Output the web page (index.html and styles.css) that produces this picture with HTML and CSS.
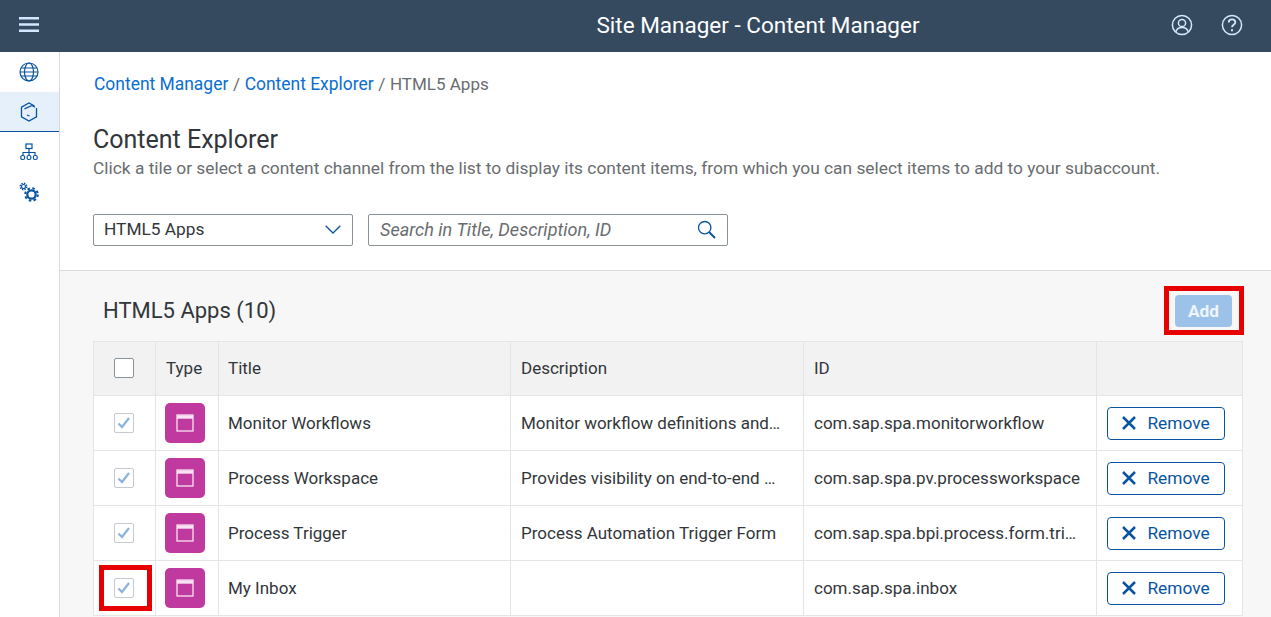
FILE: index.html
```html
<!DOCTYPE html>
<html lang="en">
<head>
<meta charset="utf-8">
<title>Site Manager - Content Manager</title>
<link rel="stylesheet" href="styles.css">
</head>
<body>
<header class="shell">
  <div class="shell-left">
    <svg class="menu-icon" width="20" height="15" viewBox="0 0 20 15"><path d="M0 1.300h20M0 7.500h20M0 13.700h20" stroke="#d1e8ff" stroke-width="2.600" fill="none"/></svg>
  </div>
  <div class="shell-title">Site Manager - Content Manager</div>
  <div class="shell-right">
    <svg width="22" height="22" viewBox="0 0 22 22" fill="none" stroke="#d1e8ff" stroke-width="1.500"><circle cx="11" cy="11" r="9.600"/><circle cx="11" cy="9" r="3.600"/><path d="M4.800 18c.6-3 3-4.600 6.200-4.600s5.600 1.600 6.200 4.600"/></svg>
    <svg width="22" height="22" viewBox="0 0 22 22" fill="none" stroke="#d1e8ff" stroke-width="1.500"><circle cx="11" cy="11" r="9.600"/><path d="M7.700 8.600c0-2 1.500-3.200 3.300-3.200s3.300 1.100 3.300 2.900c0 2.500-3.300 2.500-3.300 5" stroke-width="1.800"/><path d="M11 15.200v2" stroke-width="2"/></svg>
  </div>
</header>
<div class="body-row">
  <nav class="side">
    <div class="side-item">
      <svg width="20" height="20" viewBox="0 0 20 20" fill="none" stroke="#0854a0" stroke-width="1.200"><circle cx="10" cy="10" r="9"/><ellipse cx="10" cy="10" rx="4.500" ry="9"/><path d="M2 6h16M2 14h16M1 10h18"/></svg>
    </div>
    <div class="side-item side-item-active">
      <svg width="18" height="20" viewBox="0 0 18 20" fill="none" stroke="#0854a0" stroke-width="1.300"><path d="M4.500 6.800L12 3.500l3 1.700M16.500 6v8.800L9 19l-7.500-4.200V5.200L9 1l5.500 3"/><path d="M7 13l2.500 1"/></svg>
    </div>
    <div class="side-item">
      <svg width="18" height="18" viewBox="0 0 18 18" fill="none" stroke="#0854a0" stroke-width="1.200"><rect x="6" y="1" width="6" height="4.500"/><path d="M9 5.500v4M3 12V9.500h12V12M9 9.500V12"/><rect x=".8" y="12.500" width="3.800" height="4" rx="1.500"/><rect x="7.100" y="12.500" width="3.800" height="4" rx="1.500"/><rect x="13.400" y="12.500" width="3.800" height="4" rx="1.500"/></svg>
    </div>
    <div class="side-item">
      <svg width="20" height="20" viewBox="0 0 20 20" fill="none" stroke="#0854a0"><circle cx="12.500" cy="12.500" r="4.200" stroke-width="2.200"/><circle cx="12.500" cy="12.500" r="6.300" stroke-width="2" stroke-dasharray="2.500 2.450"/><circle cx="4.500" cy="4.500" r="2" stroke-width="1.100"/><circle cx="4.500" cy="4.500" r="3.300" stroke-width="1.300" stroke-dasharray="1.500 1.090"/></svg>
    </div>
  </nav>
  <main class="main">
    <section class="top">
      <div class="crumbs"><a class="crumb">Content Manager</a><span class="sep">/</span><a class="crumb">Content Explorer</a><span class="sep">/</span><span class="crumb-last">HTML5 Apps</span></div>
      <h1 class="title">Content Explorer</h1>
      <p class="desc">Click a tile or select a content channel from the list to display its content items, from which you can select items to add to your subaccount.</p>
      <div class="filters">
        <div class="field select"><span>HTML5 Apps</span>
          <svg width="16" height="9" viewBox="0 0 16 9" fill="none" stroke="#0854a0" stroke-width="1.300"><path d="M.7.7L8 8l7.300-7.300"/></svg>
        </div>
        <div class="field search"><span class="placeholder">Search in Title, Description, ID</span>
          <svg width="19" height="19" viewBox="0 0 19 19" fill="none" stroke="#0854a0"><circle cx="7.700" cy="7.700" r="6.200" stroke-width="1.300"/><path d="M12 12l6 6" stroke-width="2"/></svg>
        </div>
      </div>
    </section>
    <section class="panel">
      <div class="panel-head">
        <h2 class="panel-title">HTML5 Apps (10)</h2>
        <div class="add-wrap">
          <button class="add">Add</button>
          <span class="mark mark-add"></span>
        </div>
      </div>
      <table class="grid">
        <colgroup><col class="c1"><col class="c2"><col class="c3"><col class="c4"><col class="c5"><col class="c6"></colgroup>
        <thead><tr>
          <th class="center"><span class="cb cb-head"></span></th><th>Type</th><th class="tight">Title</th><th>Description</th><th>ID</th><th></th>
        </tr></thead>
        <tbody>
          <tr>
            <td class="center"><span class="cb"><svg width="14" height="12" viewBox="0 0 14 12" fill="none" stroke="#8cb3dc" stroke-width="2.200"><path d="M1.500 6.500l3.500 3.500 7-9"/></svg></span></td>
            <td class="tight"><span class="tile"><svg width="18" height="18" viewBox="0 0 18 18" fill="none" stroke="#f7e3f2"><rect x="1" y="1" width="16" height="16" stroke-width="1.300"/><path d="M1 3h16" stroke-width="3.400"/></svg></span></td>
            <td class="tight">Monitor Workflows</td><td><div class="clip clip-desc">Monitor workflow definitions and instances</div></td><td><div class="clip">com.sap.spa.monitorworkflow</div></td>
            <td><button class="remove"><svg width="14" height="14" viewBox="0 0 14 14" stroke="#0854a0" stroke-width="2.500"><path d="M1 1l12 12M13 1L1 13"/></svg>Remove</button></td>
          </tr>
          <tr>
            <td class="center"><span class="cb"><svg width="14" height="12" viewBox="0 0 14 12" fill="none" stroke="#8cb3dc" stroke-width="2.200"><path d="M1.500 6.500l3.500 3.500 7-9"/></svg></span></td>
            <td class="tight"><span class="tile"><svg width="18" height="18" viewBox="0 0 18 18" fill="none" stroke="#f7e3f2"><rect x="1" y="1" width="16" height="16" stroke-width="1.300"/><path d="M1 3h16" stroke-width="3.400"/></svg></span></td>
            <td class="tight">Process Workspace</td><td><div class="clip clip-desc">Provides visibility on end-to-end processes</div></td><td><div class="clip">com.sap.spa.pv.processworkspace</div></td>
            <td><button class="remove"><svg width="14" height="14" viewBox="0 0 14 14" stroke="#0854a0" stroke-width="2.500"><path d="M1 1l12 12M13 1L1 13"/></svg>Remove</button></td>
          </tr>
          <tr>
            <td class="center"><span class="cb"><svg width="14" height="12" viewBox="0 0 14 12" fill="none" stroke="#8cb3dc" stroke-width="2.200"><path d="M1.500 6.500l3.500 3.500 7-9"/></svg></span></td>
            <td class="tight"><span class="tile"><svg width="18" height="18" viewBox="0 0 18 18" fill="none" stroke="#f7e3f2"><rect x="1" y="1" width="16" height="16" stroke-width="1.300"/><path d="M1 3h16" stroke-width="3.400"/></svg></span></td>
            <td class="tight">Process Trigger</td><td><div class="clip clip-desc">Process Automation Trigger Form</div></td><td><div class="clip">com.sap.spa.bpi.process.form.trigger</div></td>
            <td><button class="remove"><svg width="14" height="14" viewBox="0 0 14 14" stroke="#0854a0" stroke-width="2.500"><path d="M1 1l12 12M13 1L1 13"/></svg>Remove</button></td>
          </tr>
          <tr>
            <td class="center mark-cell"><span class="cb"><svg width="14" height="12" viewBox="0 0 14 12" fill="none" stroke="#8cb3dc" stroke-width="2.200"><path d="M1.500 6.500l3.500 3.500 7-9"/></svg></span><span class="mark mark-check"></span></td>
            <td class="tight"><span class="tile"><svg width="18" height="18" viewBox="0 0 18 18" fill="none" stroke="#f7e3f2"><rect x="1" y="1" width="16" height="16" stroke-width="1.300"/><path d="M1 3h16" stroke-width="3.400"/></svg></span></td>
            <td class="tight">My Inbox</td><td></td><td><div class="clip">com.sap.spa.inbox</div></td>
            <td><button class="remove"><svg width="14" height="14" viewBox="0 0 14 14" stroke="#0854a0" stroke-width="2.500"><path d="M1 1l12 12M13 1L1 13"/></svg>Remove</button></td>
          </tr>
        </tbody>
      </table>
    </section>
  </main>
</div>
</body>
</html>
```
FILE: styles.css
```css
* { box-sizing: border-box; }
html, body { margin: 0; height: 100%; overflow: hidden; }
body { font-family: Roboto, Arial, sans-serif; font-size: 17.3px; color: #32363a; background: #fff; display: flex; flex-direction: column; }

.shell { flex: none; height: 52px; background: #354a5f; display: grid; grid-template-columns: 1fr auto 1fr; align-items: center; padding: 0 28px 3px 19px; }
.shell-left { display: flex; }
.shell-title { color: #fff; font-size: 22.5px; padding-left: 254px; }
.shell-right { display: flex; justify-content: flex-end; gap: 28px; }

.body-row { flex: 1; display: flex; min-height: 0; }
.side { flex: none; width: 60px; border-right: 1px solid #d9d9d9; }
.side-item { height: 40px; display: flex; align-items: center; justify-content: center; padding-right: 2px; }
.side-item-active { background: #e5f0fa; border-bottom: 1px solid #0854a0; }

.main { flex: 1; min-width: 0; display: flex; flex-direction: column; }
.top { flex: none; height: 219px; padding: 20px 33px 0; border-bottom: 1px solid #d9d9d9; }
.crumbs { color: #6a6d70; padding-left: 1px; height: 24px; line-height: 24px; display: flex; }
.crumb { color: #0a6ed1; font-size: 17.45px; }
.crumb-last { font-size: 17px; }
.sep { margin: 0 4.6px; }
.title { margin: 28px 0 0; font-size: 25px; font-weight: 400; line-height: 32px; }
.desc { margin: 0; color: #6a6d70; line-height: 24px; font-size: 17.35px; }
.filters { display: flex; gap: 15px; margin-top: 34px; }
.field { height: 32px; border: 1px solid #89919a; border-radius: 2px; background: #fff; display: flex; align-items: center; justify-content: space-between; padding-bottom: 2px; }
.select { width: 260px; padding-left: 10px; padding-right: 11px; }
.search { width: 360px; padding-left: 11px; padding-right: 11px; }
.placeholder { color: #6a6d70; font-style: italic; font-size: 18.1px; }

.panel { flex: 1; background: #f7f7f7; padding: 0 29px 0 33px; min-height: 0; }
.panel-head { height: 70px; display: flex; align-items: center; justify-content: space-between; padding: 10px 10px 0 10px; }
.panel-title { margin: 0 0 2px; font-size: 22px; font-weight: 400; }
.add-wrap { position: relative; }
.add { display: block; width: 57px; height: 32px; border: 0; border-radius: 4px; background: #9dc2ea; color: #eef5fc; font: 700 17.3px Roboto, Arial, sans-serif; padding: 0; }
.mark { position: absolute; border: 5px solid #e60000; pointer-events: none; }
.mark-add { left: -11px; top: -9px; width: 80px; height: 49px; }
.mark-cell { position: relative; }
.mark-check { left: 5px; top: 4px; width: 53px; height: 46px; }

.grid { width: 1149px; border-collapse: collapse; table-layout: fixed; background: #fff; font-size: 17px; }
.c1 { width: 62px; } .c2 { width: 63px; } .c3 { width: 292px; } .c4 { width: 293px; } .c5 { width: 293px; } .c6 { width: 146px; }
.grid th, .grid td { border: 1px solid #e5e5e5; padding: 0 10px; text-align: left; font-weight: 400; }
.grid th { height: 54px; background: #f2f2f2; padding-bottom: 2px; }
.grid td { height: 55px; }
.grid .tight { padding-left: 9px; }
.grid .center { padding: 0 2px 2px 0; text-align: center; }
.clip { white-space: nowrap; overflow: hidden; text-overflow: ellipsis; margin-right: 6px; }
.clip-desc { margin-right: 11px; }

.cb { display: inline-flex; width: 20px; height: 20px; border: 1px solid #c5cad0; border-radius: 2px; background: #fff; vertical-align: middle; align-items: center; justify-content: center; }
.cb-head { border-color: #89919a; }
.tile { width: 40px; height: 40px; border-radius: 5px; background: #c0399f; display: flex; align-items: center; justify-content: center; }
.remove { width: 118px; height: 33px; border: 1px solid #0854a0; border-radius: 4px; background: #fff; color: #0854a0; font: 400 17.3px Roboto, Arial, sans-serif; display: flex; align-items: center; justify-content: center; gap: 11px; padding: 0; }
```
